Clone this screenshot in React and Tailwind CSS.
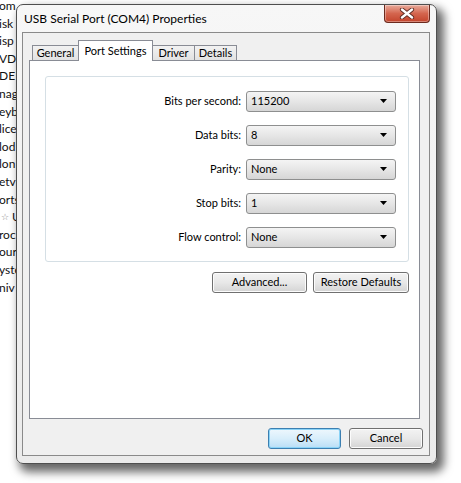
import React from 'react';

const behind = ['om', 'isk', 'isp', 'VD,', 'DE A', 'nag', 'eyb', 'lice', 'lod', 'lon', 'etv', 'orts', null, 'roc', 'our', 'yste', 'niv'];

const fields = [
    { label: 'Bits per second:', value: '115200' },
    { label: 'Data bits:', value: '8' },
    { label: 'Parity:', value: 'None' },
    { label: 'Stop bits:', value: '1' },
    { label: 'Flow control:', value: 'None' },
];

const tabs = [
    { name: 'General', w: 'w-[47px]' },
    { name: 'Port Settings', w: 'w-[75px]', active: true },
    { name: 'Driver', w: 'w-[43px]' },
    { name: 'Details', w: 'w-[43px]' },
];

function Arrow() {
    return (
        <svg width="8" height="5" viewBox="0 0 8 5" className="shrink-0">
            <path d="M0 0 H7 L3.5 4 Z" fill="#000" />
        </svg>
    );
}

function Select({ value }) {
    return (
        <div className="w-[150px] h-[21px] flex items-center justify-between pl-[4px] pr-[7px] rounded-[3px] border border-[#8e8f8f] bg-gradient-to-b from-[#f4f4f4] via-[#e6e6e6] to-[#d6d6d6] text-[11px] text-black">
            <span>{value}</span>
            <Arrow />
        </div>
    );
}

function Button({ children, w, primary }) {
    const tone = primary
        ? 'border-[#3c7fb1] from-[#eef7fd] via-[#d8eefb] to-[#b9def6] shadow-[inset_0_0_0_1px_#8ad3f7]'
        : 'border-[#707070] from-[#f3f3f3] via-[#e8e8e8] to-[#d4d4d4] shadow-[inset_0_0_0_1px_#fcfcfc]';
    return (
        <div className={`${w} h-[21px] flex items-center justify-center rounded-[3px] border bg-gradient-to-b text-[11px] text-black ${tone}`}>
            {children}
        </div>
    );
}

function CloseButton() {
    return (
        <div className="w-[46px] h-[18px] flex items-center justify-center rounded-b-[4px] border border-t-0 border-[#6b2a1e] bg-gradient-to-b from-[#e8aa9b] via-[#d4654e] to-[#c3432b] shadow-[inset_0_0_0_1px_rgba(255,255,255,0.35)]">
            <svg width="16" height="11" viewBox="0 0 16 11">
                <path d="M3 1.5 L13 9.5 M13 1.5 L3 9.5" stroke="#5a2a22" strokeWidth="4.2" strokeLinecap="round" />
                <path d="M3 1.5 L13 9.5 M13 1.5 L3 9.5" stroke="#fff" strokeWidth="2.4" strokeLinecap="round" />
            </svg>
        </div>
    );
}

export default function App() {
    return (
        <div className="relative w-[461px] h-[483px] bg-white overflow-hidden font-['Lato',sans-serif] text-black">
            {/* Device Manager tree behind the dialog */}
            <div className="absolute left-[-1px] top-[-3px] flex flex-col text-[12px] leading-[17.6px] text-[#111]">
                {behind.map((t, i) =>
                    t ? (
                        <span key={i}>{t}</span>
                    ) : (
                        <span key={i} className="flex items-center gap-[3px] pl-[2px]">
                            <span className="text-[9px] text-[#8a8a8a]">☆</span>U
                        </span>
                    )
                )}
            </div>

            {/* dialog window */}
            <div className="absolute left-[16px] top-[4px] w-[421px] h-[460px] flex flex-col rounded-[7px] border border-[#4f4f4f] bg-gradient-to-b from-[#f7f7f7] to-[#ebebeb] shadow-[5px_6px_10px_2px_rgba(0,0,0,0.6)] pl-[5px] pr-[6px] pb-[7px]">
                <div className="h-[27px] flex items-start justify-between">
                    <span className="pl-[2px] pt-[5px] text-[12px] text-black">USB Serial Port (COM4) Properties</span>
                    <CloseButton />
                </div>

                <div className="flex-1 flex flex-col border border-[#8a8a8a] bg-[#f0f0f0] pt-[7px] pl-[6px] pr-[6px] pb-[6px]">
                    {/* tabs */}
                    <div className="h-[20px] flex items-end pl-[3px] mr-[3px]">
                        {tabs.map((t) =>
                            t.active ? (
                                <div key={t.name} className={`${t.w} relative z-10 -ml-px -mb-px h-[21px] flex items-start justify-center pt-[2px] border border-b-0 border-[#898c95] bg-white text-[11px]`}>
                                    {t.name}
                                </div>
                            ) : (
                                <div key={t.name} className={`${t.w} -ml-px h-[15px] flex items-center justify-center border border-b-0 border-[#898c95] bg-gradient-to-b from-[#f2f2f2] to-[#e2e2e2] text-[11px] first:ml-0`}>
                                    {t.name}
                                </div>
                            )
                        )}
                    </div>

                    <div className="h-[359px] mr-[3px] border border-[#898c95] bg-white pt-[15px] pl-[15px]">
                        <div className="w-[364px] h-[186px] flex flex-col items-end gap-[13px] pt-[14px] pr-[12px] rounded-[3px] border border-[#d5dfe5]">
                            {fields.map((f) => (
                                <div key={f.label} className="flex items-center gap-[5px]">
                                    <span className="text-[11px]">{f.label}</span>
                                    <Select value={f.value} />
                                </div>
                            ))}
                        </div>
                        <div className="w-[364px] flex justify-end gap-[6px] mt-[10px]">
                            <Button w="w-[95px]">Advanced...</Button>
                            <Button w="w-[96px]">Restore Defaults</Button>
                        </div>
                    </div>

                    <div className="mt-[9px] flex justify-end gap-[8px]">
                        <Button w="w-[73px]" primary>OK</Button>
                        <Button w="w-[74px]">Cancel</Button>
                    </div>
                </div>
            </div>
        </div>
    );
}
